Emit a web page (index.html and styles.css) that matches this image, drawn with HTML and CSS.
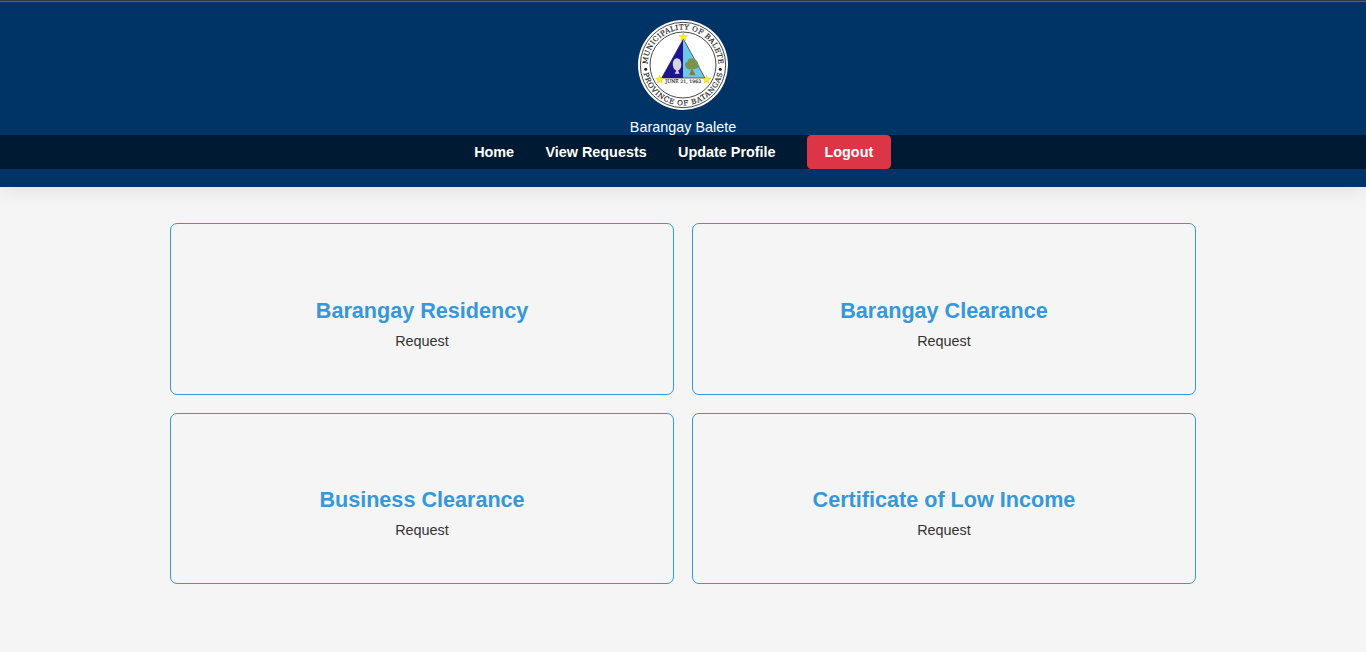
FILE: index.html
```html
<!DOCTYPE html>
<html lang="en">
<head>
<meta charset="utf-8">
<title>Barangay Balete</title>
<link rel="stylesheet" href="styles.css">
</head>
<body>
<header class="header">
  <svg class="seal" viewBox="14 15 270 270" role="img" aria-label="Municipality of Balete seal">
    <defs>
      <path id="arc-top" d="M43 150A106 106 0 0 1 255 150"/>
      <path id="arc-bottom" d="M28.200 157A121 121 0 0 0 269.800 157"/>
      <path id="star" d="M0-13L3.500-4.500L13-4L5.500 2L8 11L0 6L-8 11L-5.500 2L-13-4L-3.500-4.500Z"/>
    </defs>
    <circle cx="149" cy="150" r="135" fill="#fff"/>
    <circle cx="149" cy="150" r="128" fill="none" stroke="#222" stroke-width="2.500"/>
    <circle cx="149" cy="150" r="99" fill="none" stroke="#222" stroke-width="2.500"/>
    <text class="seal-ring"><textPath href="#arc-top" startOffset="2" textLength="328">MUNICIPALITY OF BALETE</textPath></text>
    <text class="seal-ring"><textPath href="#arc-bottom" startOffset="18" textLength="330">PROVINCE OF BATANGAS</textPath></text>
    <circle cx="37" cy="163" r="4.500" fill="#222"/>
    <circle cx="261" cy="163" r="4.500" fill="#222"/>
    <path d="M150 72L85 189H150Z" fill="#1c1490"/>
    <path d="M150 72L215 189H150Z" fill="#68c9e8"/>
    <path d="M150 72L215 189H85Z" fill="none" stroke="#222" stroke-width="2"/>
    <path d="M131 130C121 130 117 142 119 153C120 162 126 165 129 167L124 176H139L134 167C140 164 145 158 144 148C143 136 139 130 131 130Z" fill="#d5d5df"/>
    <path d="M168 180L173 165L178 160L180 168L187 181Z" fill="#99743a"/>
    <path d="M158 156C152 149 155 142 162 141C163 131 175 125 183 134C191 133 195 142 194 148C202 153 198 161 190 160C184 165 177 158 172 163C165 164 159 161 158 156Z" fill="#749653"/>
    <path d="M161 150L171 146L182 151M168 139L180 140M165 157L176 154" fill="none" stroke="#a27e47" stroke-width="2"/>
    <g fill="#ffee18" stroke="#c5ae20" stroke-width="1">
      <use href="#star" x="150" y="66"/>
      <use href="#star" x="79" y="194"/>
      <use href="#star" x="220" y="194"/>
    </g>
    <text class="seal-date" x="150" y="203" textLength="108">JUNE 21, 1963</text>
  </svg>
  <div class="brand">Barangay Balete</div>
  <nav class="nav">
    <a class="nav-link" href="#">Home</a>
    <a class="nav-link" href="#">View Requests</a>
    <a class="nav-link" href="#">Update Profile</a>
    <a class="logout" href="#">Logout</a>
  </nav>
</header>
<main class="cards">
  <section class="card"><h2 class="card-title">Barangay Residency</h2><p class="card-text">Request</p></section>
  <section class="card"><h2 class="card-title">Barangay Clearance</h2><p class="card-text">Request</p></section>
  <section class="card card-short"><h2 class="card-title">Business Clearance</h2><p class="card-text">Request</p></section>
  <section class="card card-short"><h2 class="card-title">Certificate of Low Income</h2><p class="card-text">Request</p></section>
</main>
</body>
</html>
```
FILE: styles.css
```css
* { box-sizing: border-box; }
body {
  margin: 0;
  height: 652px;
  overflow: hidden;
  background: #f5f5f5;
  font-family: "Liberation Sans", Arial, sans-serif;
  font-size: 14.4px;
  color: #333;
  border-top: 1px solid #35363a;
}
.header {
  display: flex;
  flex-direction: column;
  align-items: center;
  height: 186px;
  padding-top: 18px;
  border-top: 1px solid #5f6368;
  background: #003366;
  color: #fff;
  box-shadow: 0 4px 18px rgba(0, 0, 0, 0.08);
}
.seal { display: block; width: 90px; height: 90px; flex: none; }
.seal-ring { font: 21px "DejaVu Serif", serif; fill: #222; stroke: #222; stroke-width: 0.5; }
.seal-date { font: 14px "DejaVu Serif", serif; fill: #222; stroke: #222; stroke-width: 0.4; text-anchor: middle; }
.brand { margin-top: 9px; height: 16px; line-height: 16px; }
.nav {
  display: flex;
  justify-content: center;
  align-items: center;
  width: 100%;
  height: 34px;
  padding-right: 1px;
  background: #001a33;
  font-weight: bold;
}
.nav-link { margin-right: 31.3px; color: #fff; text-decoration: none; }
.logout {
  width: 84px;
  height: 34px;
  line-height: 34px;
  border-radius: 4.5px;
  background: #dc3545;
  color: #fff;
  text-align: center;
  text-decoration: none;
}
.cards {
  display: grid;
  grid-template-columns: 504px 504px;
  grid-template-rows: 172px 171px;
  gap: 18px;
  width: 1026px;
  margin: 36px auto 0;
}
.card {
  padding-top: 74px;
  border: 1px solid #3498db;
  border-radius: 7px;
  text-align: center;
}
.card-short { padding-top: 73px; }
.card-title { margin: 0; font-size: 21.6px; line-height: 25px; color: #3498db; }
.card-text { margin: 10px 0 0; line-height: 17px; }
```
